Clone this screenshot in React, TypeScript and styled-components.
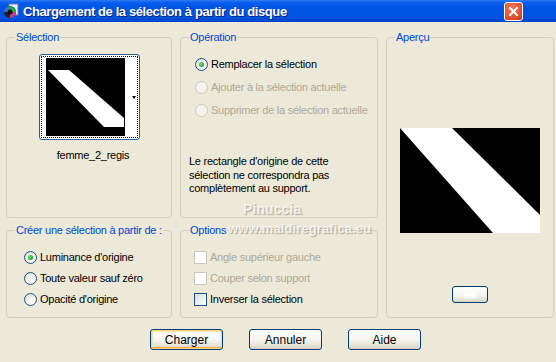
import React from "react";
import styled, { createGlobalStyle } from "styled-components";

const Global = createGlobalStyle`
  html, body { margin: 0; padding: 0; background: #ECE9D8; }
  body { font-family: "Liberation Sans", Arial, sans-serif; }
`;

const Dialog = styled.div`
  position: relative;
  width: 556px;
  height: 362px;
  background: #ECE9D8;
  display: flex;
  flex-direction: column;
  overflow: hidden;
  font-size: 11px;
  letter-spacing: -0.25px;
  color: #000;
`;

const TitleBar = styled.div`
  height: 22px;
  flex: none;
  display: flex;
  align-items: center;
  padding: 0 2px 0 3px;
  background: linear-gradient(180deg, #2E7BF5 0%, #0A5DEC 12%, #0055E5 30%, #0053E1 80%, #0042C8 100%);
  color: #fff;
`;

const TitleText = styled.span`
  flex: 1;
  margin-left: 4px;
  font-weight: bold;
  font-size: 13px;
  letter-spacing: -0.4px;
  text-shadow: 1px 1px 0 #0A1F7A;
`;

const CloseBtn = styled.div`
  width: 17px;
  height: 17px;
  margin-right: 31px;
  border: 1px solid #fff;
  border-radius: 3px;
  background: radial-gradient(circle at 40% 35%, #F07A5C 0%, #E0502F 60%, #C5361A 100%);
  display: flex;
  align-items: center;
  justify-content: center;
`;

const Content = styled.div`
  display: grid;
  grid-template-columns: 166px 198px 168px;
  grid-template-rows: 187px 94px;
  column-gap: 8px;
  row-gap: 6px;
  padding: 9px 0 0 6px;
`;

const Group = styled.fieldset<{ $col: number; $row: string }>`
  margin: 0;
  min-width: 0;
  padding: 0;
  border: 1px solid #D0D0BF;
  border-radius: 4px;
  grid-column: ${(p) => p.$col};
  grid-row: ${(p) => p.$row};
  display: flex;
  flex-direction: column;
`;

const Legend = styled.legend`
  color: #0046D5;
  padding: 0 1px;
  margin-left: 8px;
  line-height: 13px;
  white-space: nowrap;
`;

const SelBody = styled.div`
  display: flex;
  flex-direction: column;
  align-items: center;
  padding-top: 10px;
`;

const Thumb = styled.div`
  border: 1px solid #2C5C94;
  border-radius: 3px;
  background: #fff;
  outline: 1px dotted #000;
  outline-offset: -3px;
  display: flex;
  align-items: flex-start;
  padding: 3px 0 0 6px;
  box-sizing: border-box;
  width: 101px;
  height: 86px;
`;

const ThumbSide = styled.div`
  flex: 1;
  height: 78px;
  display: flex;
  align-items: center;
  justify-content: flex-end;
  padding-right: 3px;
`;

const Arrow = styled.div`
  width: 0;
  height: 0;
  border-left: 2px solid transparent;
  border-right: 2px solid transparent;
  border-top: 3px solid #000;
`;

const Caption = styled.div`
  margin-top: 9px;
  line-height: 13px;
  padding-left: 8px;
`;

const OptBody = styled.div<{ $pad: number; $top: number }>`
  display: flex;
  flex-direction: column;
  padding: ${(p) => p.$top}px 0 0 ${(p) => p.$pad}px;
  gap: 5px;
`;

const OpBody = styled.div`
  display: flex;
  flex-direction: column;
  padding: 12px 0 0 14px;
  gap: 7px;
`;

const Row = styled.div<{ $disabled?: boolean }>`
  display: flex;
  align-items: center;
  height: 16px;
  white-space: nowrap;
  color: ${(p) => (p.$disabled ? "#ACA899" : "#000")};
`;

const RadioCircle = styled.span<{ $disabled?: boolean }>`
  width: 11px;
  height: 11px;
  border-radius: 50%;
  border: 1px solid ${(p) => (p.$disabled ? "#CAC8BB" : "#1C5180")};
  background: ${(p) =>
    p.$disabled
      ? "#F4F3EE"
      : "radial-gradient(circle at 70% 70%, #FFFFFF 0%, #F4F4F0 40%, #D6D5CC 100%)"};
  display: flex;
  align-items: center;
  justify-content: center;
  margin-right: 3px;
  flex: none;
`;

const Dot = styled.span`
  width: 5px;
  height: 5px;
  border-radius: 50%;
  background: radial-gradient(circle at 40% 40%, #8CE68C 0%, #2BB12B 50%, #1E8C1E 100%);
`;

const Check = styled.span<{ $disabled?: boolean }>`
  width: 11px;
  height: 11px;
  border: 1px solid ${(p) => (p.$disabled ? "#CAC8BB" : "#1C5180")};
  background: ${(p) =>
    p.$disabled ? "#FFFFFF" : "linear-gradient(135deg, #DCDCD7 0%, #F2F2EE 60%, #FFFFFF 100%)"};
  margin-right: 3px;
  flex: none;
`;

const Note = styled.p`
  margin: 37px 0 0 8px;
  line-height: 13.5px;
  width: 176px;
`;

const PreviewBody = styled.div`
  display: flex;
  flex-direction: column;
  align-items: center;
  padding-top: 84px;
`;

const SmallBtn = styled.div`
  margin-top: 53px;
  width: 36px;
  height: 17px;
  box-sizing: border-box;
  border: 1px solid #003C74;
  border-radius: 3px;
  background: linear-gradient(180deg, #FFFFFF 0%, #F3F2EC 60%, #D9D4C8 100%);
  display: flex;
  align-items: center;
  justify-content: center;
`;

const Blur = styled.span`
  width: 12px;
  height: 6px;
  background: #fff;
  filter: blur(1.5px);
`;

const ButtonRow = styled.div`
  display: flex;
  gap: 26px;
  padding: 11px 0 0 150px;
`;

const Button = styled.div<{ $default?: boolean }>`
  width: 73px;
  height: 21px;
  box-sizing: border-box;
  border: 1px solid #003C74;
  border-radius: 3px;
  background: linear-gradient(180deg, #FFFFFF 0%, #F5F4EF 55%, #E3DFD4 85%, #D6D0C5 100%);
  box-shadow: ${(p) =>
    p.$default ? "inset 0 0 0 1px #FFD58A, inset 0 -2px 0 0 #F2A83C, inset 1px 1px 0 1px #FCE3AE" : "none"};
  display: flex;
  align-items: center;
  justify-content: center;
  font-size: 12px;
  letter-spacing: 0;
`;

const Watermark = styled.div`
  position: absolute;
  left: 228px;
  top: 199px;
  display: flex;
  flex-direction: column;
  align-items: flex-start;
  font-weight: bold;
  font-size: 13px;
  letter-spacing: 0.1px;
  color: rgba(255, 255, 255, 0.75);
  text-shadow: 1px 1px 1px rgba(120, 115, 100, 0.55);
  line-height: 20px;
  pointer-events: none;
`;

const WmName = styled.span`
  margin-left: 15px;
  font-size: 14px;
`;

const Radio = ({ checked, disabled, children }: { checked?: boolean; disabled?: boolean; children: React.ReactNode }) => (
  <Row $disabled={disabled}>
    <RadioCircle $disabled={disabled}>{checked && <Dot />}</RadioCircle>
    {children}
  </Row>
);

const CheckBox = ({ disabled, children }: { disabled?: boolean; children: React.ReactNode }) => (
  <Row $disabled={disabled}>
    <Check $disabled={disabled} />
    {children}
  </Row>
);

export default function App() {
  return (
    <>
      <Global />
      <Dialog>
        <TitleBar>
          <svg width="16" height="16" viewBox="0 0 16 16">
            <rect x="6" y="1" width="9" height="11" fill="#E8F0FF" stroke="#6B7FA8" strokeWidth="1" />
            <circle cx="7" cy="9" r="6" fill="#222" />
            <path d="M7 3 A6 6 0 0 1 13 9 L7 9 Z" fill="#2AA84A" />
            <path d="M7 9 L13 9 A6 6 0 0 1 7 15 Z" fill="#C53A9A" />
            <path d="M1 9 A6 6 0 0 1 7 3 L7 9 Z" fill="#3A6FD8" />
            <circle cx="7" cy="9" r="2.5" fill="#111" />
          </svg>
          <TitleText>Chargement de la sélection à partir du disque</TitleText>
          <CloseBtn>
            <svg width="11" height="11" viewBox="0 0 11 11">
              <path d="M2 2 L9 9 M9 2 L2 9" stroke="#fff" strokeWidth="2" strokeLinecap="square" />
            </svg>
          </CloseBtn>
        </TitleBar>
        <Content>
          <Group $col={1} $row="1">
            <Legend>Sélection</Legend>
            <SelBody>
              <Thumb>
                <svg width="79" height="78" viewBox="0 0 79 78">
                  <rect width="79" height="78" fill="#000" />
                  <polygon points="2,12 23,12 78,60 78,69 58,69" fill="#fff" />
                </svg>
                <ThumbSide>
                  <Arrow />
                </ThumbSide>
              </Thumb>
              <Caption>femme_2_regis</Caption>
            </SelBody>
          </Group>
          <Group $col={2} $row="1">
            <Legend>Opération</Legend>
            <OpBody>
              <Radio checked>Remplacer la sélection</Radio>
              <Radio disabled>Ajouter à la sélection actuelle</Radio>
              <Radio disabled>Supprimer de la sélection actuelle</Radio>
            </OpBody>
            <Note>
              Le rectangle d'origine de cette sélection ne correspondra pas complètement au support.
            </Note>
          </Group>
          <Group $col={3} $row="1 / span 2">
            <Legend>Aperçu</Legend>
            <PreviewBody>
              <svg width="140" height="105" viewBox="0 0 140 105">
                <rect width="140" height="105" fill="#000" />
                <polygon points="0,0 52,0 140,87 140,105 93,105" fill="#fff" />
              </svg>
              <SmallBtn>
                <Blur />
              </SmallBtn>
            </PreviewBody>
          </Group>
          <Group $col={1} $row="2">
            <Legend>Créer une sélection à partir de :</Legend>
            <OptBody $pad={17} $top={12}>
              <Radio checked>Luminance d'origine</Radio>
              <Radio>Toute valeur sauf zéro</Radio>
              <Radio>Opacité d'origine</Radio>
            </OptBody>
          </Group>
          <Group $col={2} $row="2">
            <Legend>Options</Legend>
            <OptBody $pad={13} $top={12}>
              <CheckBox disabled>Angle supérieur gauche</CheckBox>
              <CheckBox disabled>Couper selon support</CheckBox>
              <CheckBox>Inverser la sélection</CheckBox>
            </OptBody>
          </Group>
        </Content>
        <ButtonRow>
          <Button $default>Charger</Button>
          <Button>Annuler</Button>
          <Button>Aide</Button>
        </ButtonRow>
        <Watermark>
          <WmName>Pinuccia</WmName>
          <span>www.maldiregrafica.eu</span>
        </Watermark>
      </Dialog>
    </>
  );
}
